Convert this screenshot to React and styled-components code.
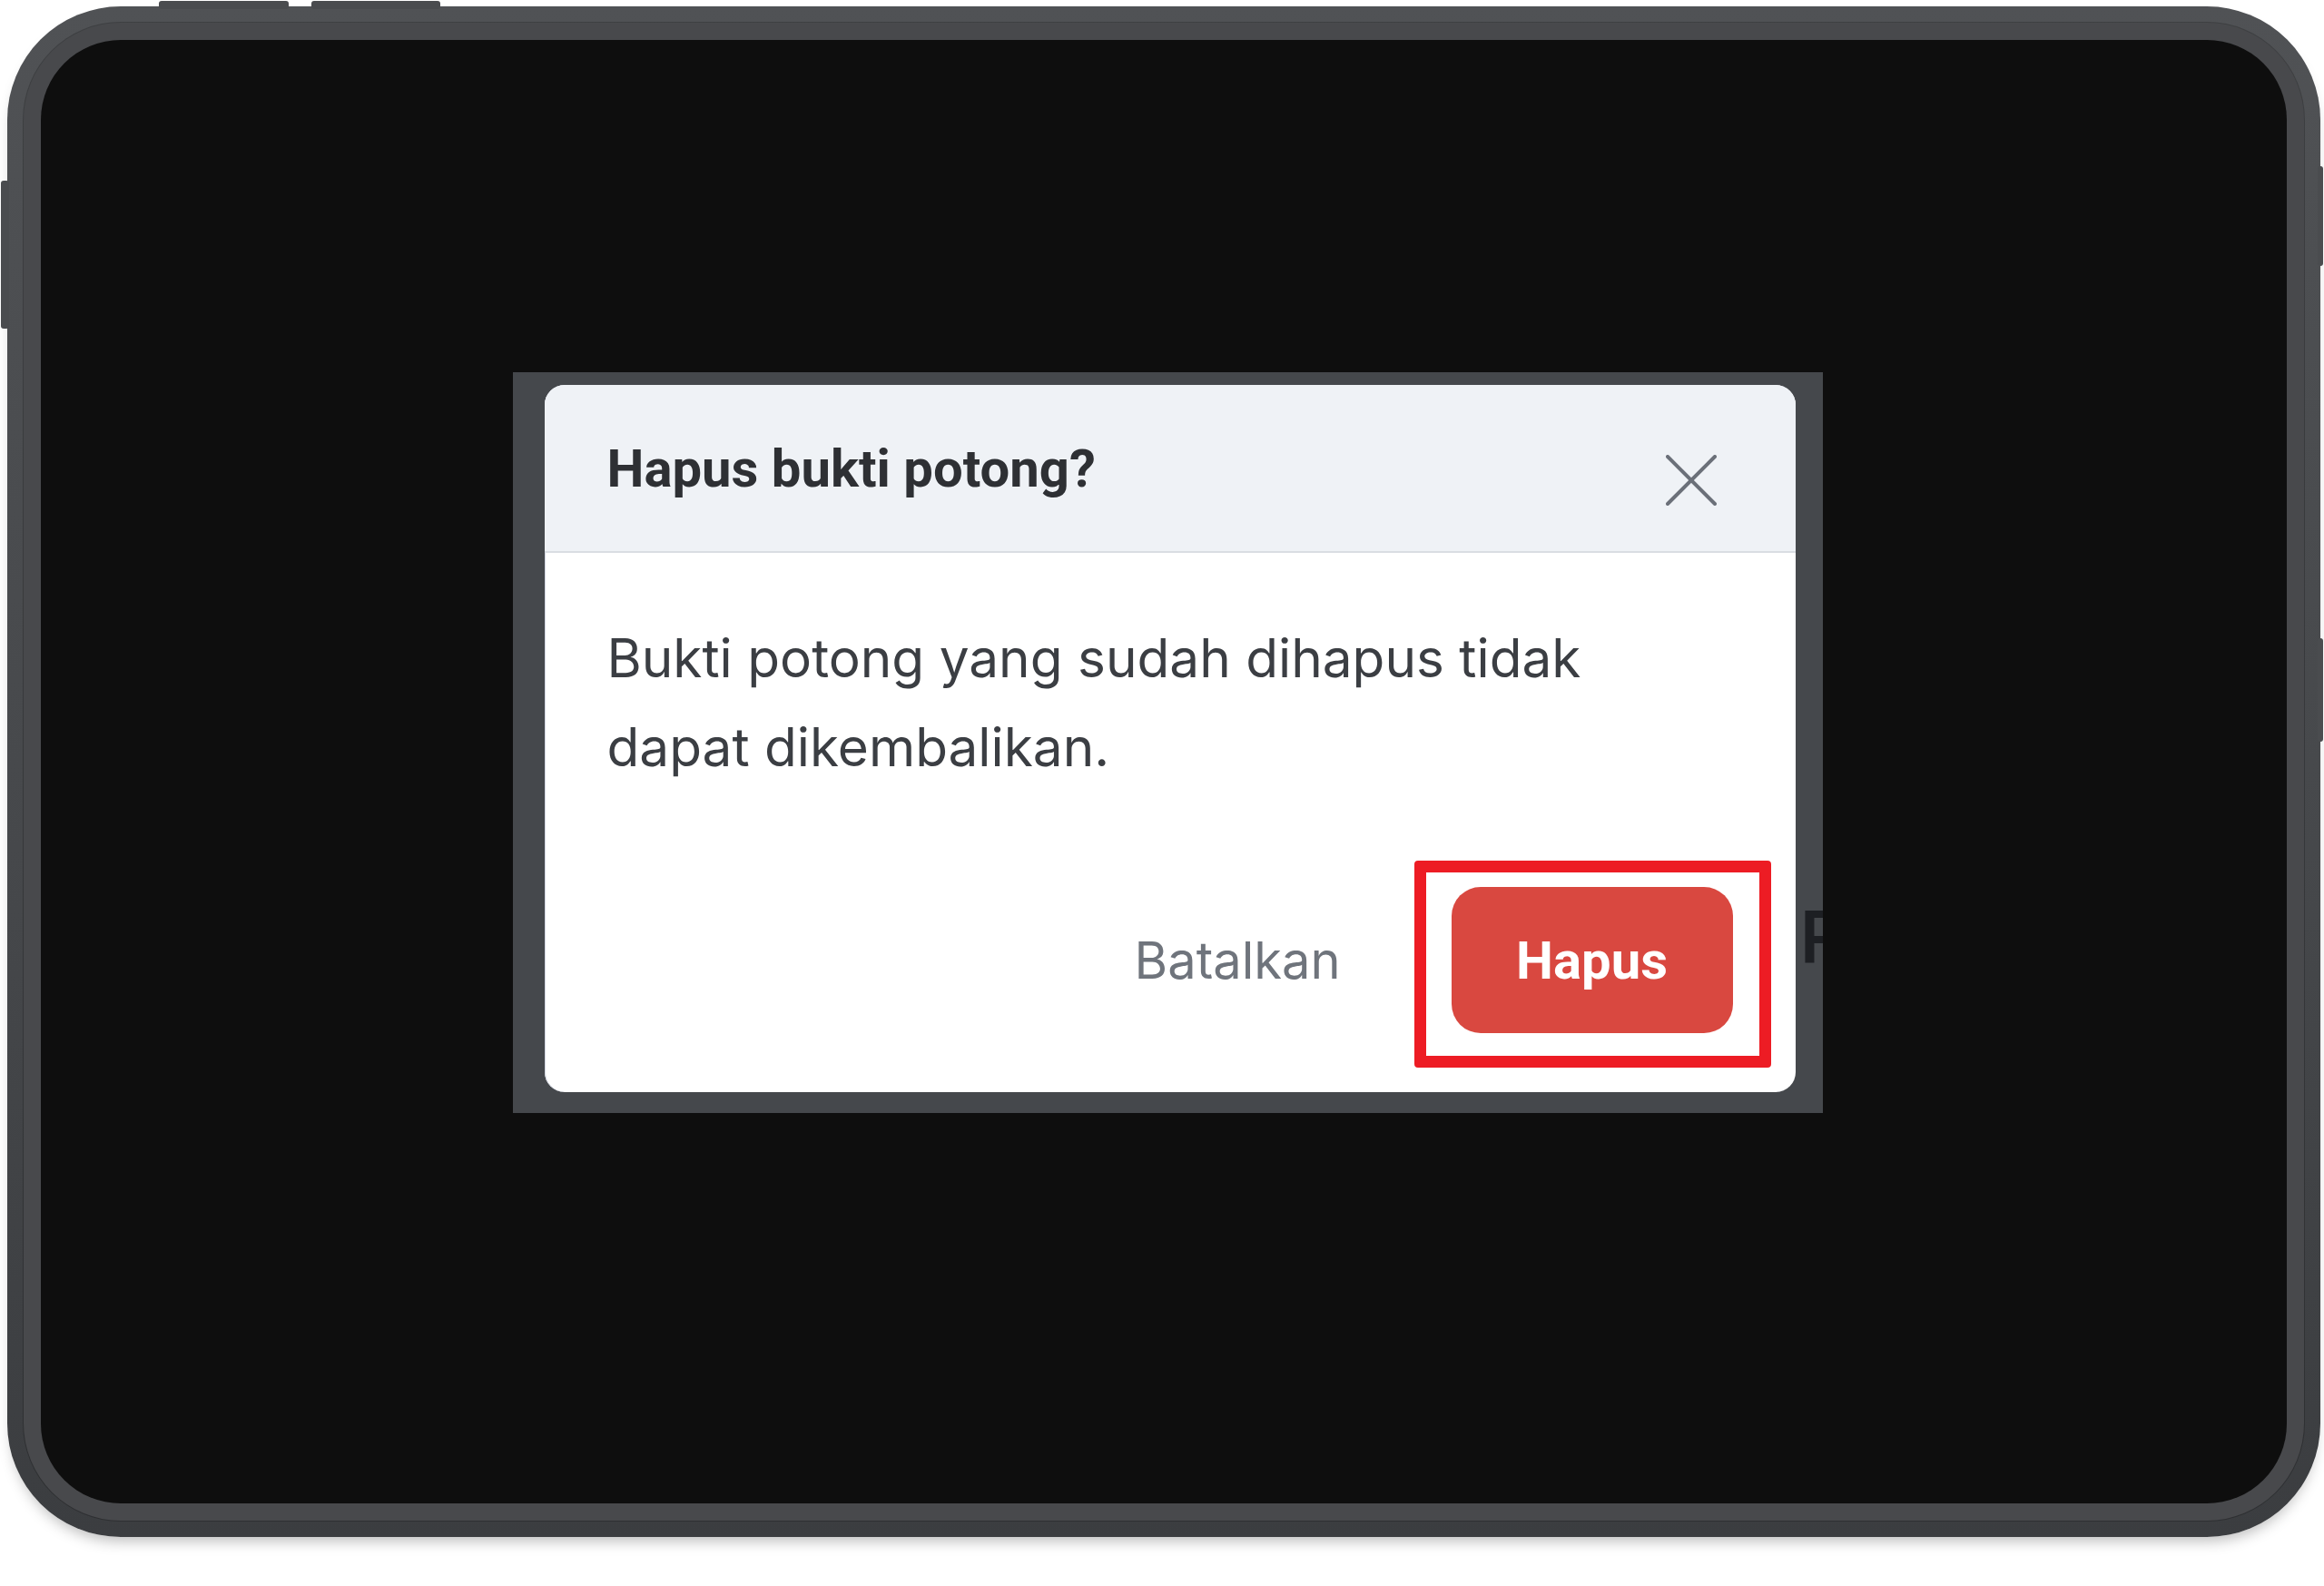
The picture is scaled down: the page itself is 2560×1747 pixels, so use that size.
import React from "react";
import styled, { createGlobalStyle } from "styled-components";

const GlobalStyle = createGlobalStyle`
  html, body {
    margin: 0;
    padding: 0;
    background: #ffffff;
  }
  body {
    font-family: "Inter", "Roboto", sans-serif;
  }
`;

const Page = styled.div`
  width: 2560px;
  height: 1747px;
  box-sizing: border-box;
  padding: 7px 0 0 8px;
  background: #ffffff;
  overflow: hidden;
`;

const Device = styled.div`
  position: relative;
  width: 2548px;
  height: 1686px;
  box-sizing: border-box;
  padding: 18px;
  border-radius: 125px;
  background: linear-gradient(180deg, #505255 0%, #46484b 55%, #3b3d40 100%);
  box-shadow: 0 10px 16px -6px rgba(0, 0, 0, 0.28);
`;

const Bezel = styled.div`
  height: 100%;
  box-sizing: border-box;
  padding: 19px;
  border-radius: 107px;
  background: #48494c;
  box-shadow: 0 0 0 1px rgba(0, 0, 0, 0.22);
`;

const SideButton = styled.span`
  position: absolute;
  background: #4a4c4f;
  border-radius: 3px;
  ${(p) => p.$css}
`;

const Screen = styled.div`
  height: 100%;
  box-sizing: border-box;
  border-radius: 88px;
  background: #0e0e0e;
  display: flex;
  justify-content: center;
  align-items: flex-start;
  padding: 366px 0 0 8px;
  overflow: hidden;
`;

const Backdrop = styled.div`
  position: relative;
  width: 1443px;
  height: 816px;
  box-sizing: border-box;
  padding: 14px 30px 23px 35px;
  background: #45484c;
  overflow: hidden;
`;

const BehindGlyph = styled.span`
  position: absolute;
  left: 1418px;
  top: 582px;
  font-family: "Roboto", sans-serif;
  font-weight: 500;
  font-size: 82px;
  line-height: 1;
  color: #1d1f23;
`;

const Card = styled.div`
  position: relative;
  z-index: 1;
  height: 100%;
  display: flex;
  flex-direction: column;
  border-radius: 22px;
  background: #ffffff;
  overflow: hidden;
  box-shadow: inset 1px 0 0 #d3d7e2;
`;

const Header = styled.div`
  height: 185px;
  box-sizing: border-box;
  display: flex;
  align-items: center;
  justify-content: space-between;
  padding: 0 87px 0 69px;
  background: #eff2f6;
  border-bottom: 2px solid #d9dde2;
`;

const Title = styled.h2`
  margin: 0;
  font-family: "Roboto", sans-serif;
  font-weight: 700;
  font-size: 58px;
  color: #2e3034;
`;

const CloseButton = styled.button`
  display: flex;
  padding: 0;
  margin-top: 26px;
  border: none;
  background: none;
  cursor: pointer;
`;

const Body = styled.p`
  margin: 0;
  padding: 67px 69px 0;
  max-width: 1160px;
  font-family: "Inter", sans-serif;
  font-size: 58.5px;
  line-height: 98px;
  color: #3b3e43;
`;

const Footer = styled.div`
  display: flex;
  justify-content: flex-end;
  align-items: center;
  gap: 122px;
  margin-top: 105px;
  padding: 0 69px 65px 0;
`;

const CancelButton = styled.button`
  padding: 0;
  border: none;
  background: none;
  font-family: "Inter", sans-serif;
  font-size: 56px;
  color: #6f747c;
  cursor: pointer;
`;

const Highlight = styled.div`
  position: relative;
  display: flex;

  &::after {
    content: "";
    position: absolute;
    top: -29px;
    left: -41px;
    right: -42px;
    bottom: -38px;
    border: 13px solid #ed1c24;
    border-radius: 4px;
    pointer-events: none;
  }
`;

const DeleteButton = styled.button`
  width: 310px;
  height: 161px;
  border: none;
  border-radius: 32px;
  background: #d94840;
  font-family: "Roboto", sans-serif;
  font-weight: 700;
  font-size: 58px;
  color: #ffffff;
  cursor: pointer;
`;

const CloseIcon = () => (
  <svg width="56" height="56" viewBox="0 0 56 56" fill="none">
    <path
      d="M2 2 L54 54 M54 2 L2 54"
      stroke="#6b7079"
      strokeWidth="4"
      strokeLinecap="round"
    />
  </svg>
);

const App = () => {
  return (
    <>
      <GlobalStyle />
      <Page>
        <Device>
          <SideButton $css="top: -6px; left: 167px; width: 143px; height: 9px;" />
          <SideButton $css="top: -6px; left: 335px; width: 142px; height: 9px;" />
          <SideButton $css="top: 192px; left: -7px; width: 9px; height: 163px;" />
          <SideButton $css="top: 176px; right: -3px; width: 6px; height: 110px;" />
          <SideButton $css="top: 696px; right: -3px; width: 6px; height: 114px;" />
          <Bezel>
            <Screen>
              <Backdrop>
                <BehindGlyph>P</BehindGlyph>
                <Card>
                  <Header>
                    <Title>Hapus bukti potong?</Title>
                    <CloseButton aria-label="Tutup">
                      <CloseIcon />
                    </CloseButton>
                  </Header>
                  <Body>
                    Bukti potong yang sudah dihapus tidak dapat dikembalikan.
                  </Body>
                  <Footer>
                    <CancelButton>Batalkan</CancelButton>
                    <Highlight>
                      <DeleteButton>Hapus</DeleteButton>
                    </Highlight>
                  </Footer>
                </Card>
              </Backdrop>
            </Screen>
          </Bezel>
        </Device>
      </Page>
    </>
  );
};

export default App;
